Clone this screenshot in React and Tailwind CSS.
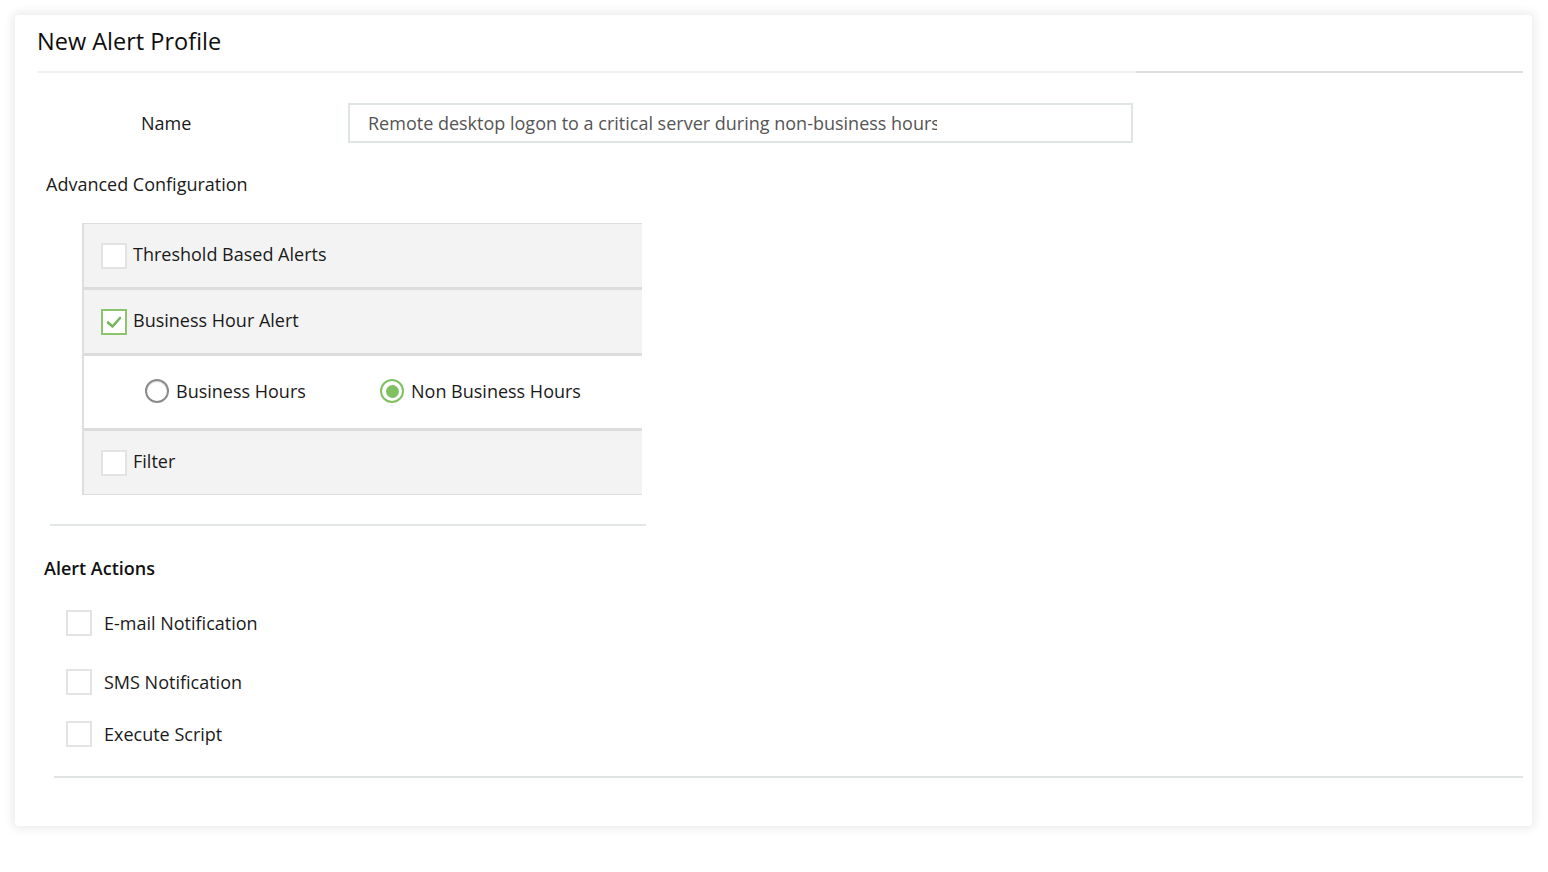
import React from "react";

const font = { fontFamily: "'Open Sans', 'Noto Sans', sans-serif" };

function Box({ checked }) {
  if (checked) {
    return (
      <span className="w-[26px] h-[26px] shrink-0 bg-white border-2 border-[#8cc56e] flex items-center justify-center">
        <svg width="18" height="16" viewBox="0 0 18 16" fill="none">
          <path d="M3 8.5 L7.5 12.5 L15 4" stroke="#74b85a" strokeWidth="2.6" strokeLinecap="round" strokeLinejoin="round" />
        </svg>
      </span>
    );
  }
  return <span className="w-[26px] h-[26px] shrink-0 bg-white border-2 border-[#e3e3e3]" />;
}

function Radio({ checked }) {
  if (checked) {
    return (
      <span className="w-[24px] h-[24px] shrink-0 rounded-full border-[2.5px] border-[#7fc063] bg-white flex items-center justify-center">
        <span className="w-[13px] h-[13px] rounded-full bg-[#7fc063]" />
      </span>
    );
  }
  return <span className="w-[24px] h-[24px] shrink-0 rounded-full border-[2.5px] border-[#8c8c8c] bg-white shadow-[inset_0_1px_1px_rgba(0,0,0,0.15)]" />;
}

function PanelRow({ checked, label }) {
  return (
    <div className="h-[63px] bg-[#f3f3f3] flex items-center pl-[17px] gap-[6px]">
      <Box checked={checked} />
      <span className="text-[18px] leading-[24px] pb-[3px] text-[#1a1a1a]">{label}</span>
    </div>
  );
}

export default function App() {
  return (
    <div className="min-h-screen bg-white pt-[15px] pl-[15px]" style={font}>
      <div className="w-[1517px] h-[811px] bg-white rounded-[4px] shadow-[0_0_10px_3px_rgba(0,0,0,0.08)] pt-[11px]">
        {/* Header */}
        <h1 className="pl-[22px] text-[23.5px] leading-[30px] text-[#0d0d0d]">New Alert Profile</h1>
        <div className="mt-[15px] ml-[22px] flex">
          <div className="w-[1099px] h-[2px] bg-[#f2f2f2]" />
          <div className="w-[387px] h-[2px] bg-[#dedede]" />
        </div>

        {/* Name */}
        <div className="mt-[30px] flex items-center">
          <div className="w-[333px] pl-[126px] text-[18px] text-[#1a1a1a]">Name</div>
          <div className="w-[785px] h-[40px] border-2 border-[#dfe5e5] pl-[18px] pr-[194px] flex items-center text-[18px] text-[#555] whitespace-nowrap overflow-hidden">
            <span className="overflow-hidden">Remote desktop logon to a critical server during non-business hours</span>
          </div>
        </div>

        {/* Advanced Configuration */}
        <div className="mt-[29px] pl-[31px] text-[18px] leading-[24px] text-[#1a1a1a]">Advanced Configuration</div>

        <div className="mt-[27px] ml-[67px] w-[560px] border-l-2 border-t border-b border-[#dedede]">
          <PanelRow label="Threshold Based Alerts" />
          <div className="h-[3px] bg-[#dcdcdc]" />
          <PanelRow checked label="Business Hour Alert" />
          <div className="h-[3px] bg-[#dcdcdc]" />
          <div className="h-[72px] bg-white flex items-center pl-[61px] pb-[2px]">
            <div className="w-[235px] flex items-center gap-[7px]">
              <Radio />
              <span className="text-[18px] leading-[24px] text-[#1a1a1a]">Business Hours</span>
            </div>
            <div className="flex items-center gap-[7px]">
              <Radio checked />
              <span className="text-[18px] leading-[24px] text-[#1a1a1a]">Non Business Hours</span>
            </div>
          </div>
          <div className="h-[3px] bg-[#dcdcdc]" />
          <PanelRow label="Filter" />
        </div>

        <div className="mt-[29px] ml-[35px] w-[596px] h-[2px] bg-[#e3e7e7]" />

        {/* Alert Actions */}
        <div className="mt-[30px] pl-[29px] text-[18px] leading-[24px] font-semibold text-[#111]">Alert Actions</div>

        <div className="pl-[51px] flex flex-col">
          <div className="mt-[30px] h-[26px] flex items-center gap-[12px]">
            <Box />
            <span className="text-[18px] text-[#1a1a1a]">E-mail Notification</span>
          </div>
          <div className="mt-[33px] h-[26px] flex items-center gap-[12px]">
            <Box />
            <span className="text-[18px] text-[#1a1a1a]">SMS Notification</span>
          </div>
          <div className="mt-[26px] h-[26px] flex items-center gap-[12px]">
            <Box />
            <span className="text-[18px] text-[#1a1a1a]">Execute Script</span>
          </div>
        </div>

        <div className="mt-[29px] ml-[39px] mr-[9px] h-[2px] bg-[#e0e4e4]" />
      </div>
    </div>
  );
}
